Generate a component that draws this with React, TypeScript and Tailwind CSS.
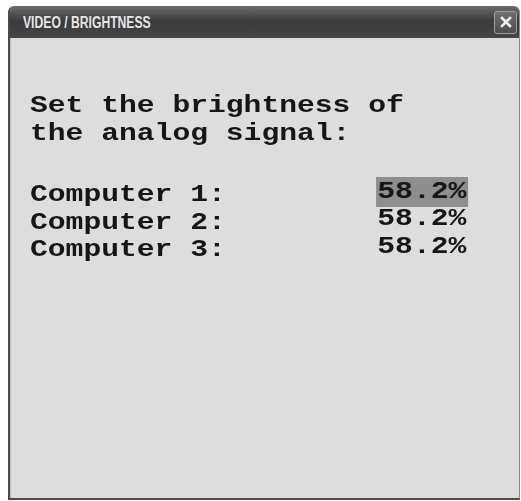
import React from "react";

const rows = [
  { label: "Computer 1:", value: "58.2%", selected: true },
  { label: "Computer 2:", value: "58.2%", selected: false },
  { label: "Computer 3:", value: "58.2%", selected: false },
];

function CloseButton() {
  return (
    <div className="w-[23px] h-[23px] rounded-[3px] border border-[#a0a0a0] bg-gradient-to-b from-[#707070] to-[#4c4c4c] flex items-center justify-center">
      <svg width="14" height="14" viewBox="0 0 14 14">
        <path d="M3 3 L11 11 M11 3 L3 11" stroke="#f2f2f2" strokeWidth="2.6" strokeLinecap="square" />
      </svg>
    </div>
  );
}

export default function App() {
  return (
    <div className="w-[521px] h-[501px] bg-white pt-[6px] pl-[8px] overflow-hidden">
      <div className="w-[512px] h-[494px] flex flex-col rounded-t-[6px] overflow-hidden border-l-2 border-b-2 border-r border-[#4a4a4a] border-r-[#8a8a8a] bg-[#dddddd]">
        {/* Title bar */}
        <div className="h-[32px] shrink-0 flex items-center justify-between pl-[13px] pr-[2px] bg-gradient-to-b from-[#6b6b6b] via-[#3a3a3a] to-[#464646]">
          <span
            className="inline-block origin-left scale-x-[0.76] text-[16px] leading-none font-bold uppercase text-[#e6e6e6] mt-[1px]"
            style={{ fontFamily: '"Liberation Sans", Arial, sans-serif' }}
          >
            VIDEO / BRIGHTNESS
          </span>
          <CloseButton />
        </div>

        {/* Body */}
        <div className="flex-1 border-l border-[#bdbdbd] pl-[19px] pt-[54px]">
          <div
            className="origin-top-left scale-x-[1.236] text-[24px] font-bold text-[#161616]"
            style={{ fontFamily: '"Liberation Mono", "Courier New", monospace' }}
          >
            <div className="leading-[28px]">
              <div>Set the brightness of</div>
              <div>the analog signal:</div>
            </div>
            <div className="mt-[33px] leading-[27.5px]">
              {rows.map((r) => (
                <div key={r.label} className="flex items-center h-[27.5px]">
                  <span className="w-[280px] whitespace-pre">{r.label}</span>
                  <span
                    className={
                      "inline-block leading-[30px] px-[1px] -translate-y-[3px] " +
                      (r.selected ? "bg-[#8e8e8e]" : "")
                    }
                  >
                    {r.value}
                  </span>
                </div>
              ))}
            </div>
          </div>
        </div>
      </div>
    </div>
  );
}
